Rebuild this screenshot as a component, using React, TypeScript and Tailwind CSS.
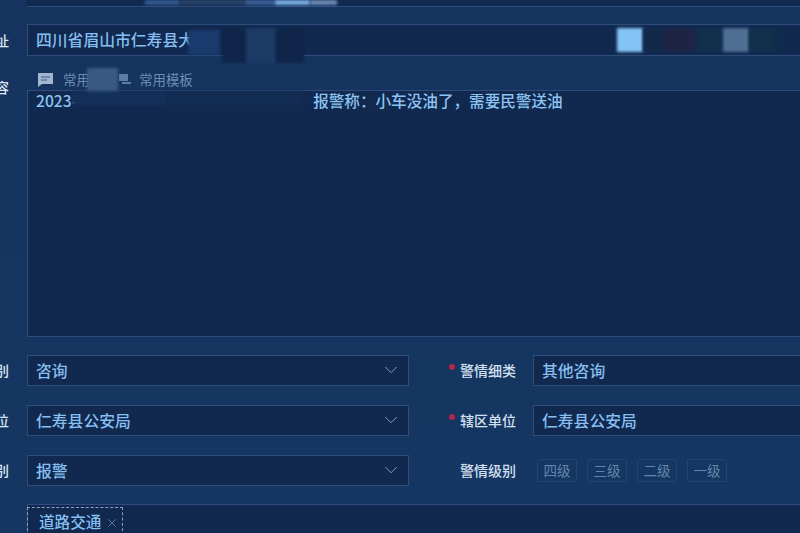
import { ChevronDown, X } from 'lucide-react'

const fieldCls = 'flex h-[31px] shrink-0 items-center border border-[#2d4d7d] bg-[#11294f] pl-2 text-[15.8px] font-medium text-[#86bff0]'

// 打码色块
const patches = [
  { left: 145, top: 0, width: 35, height: 5, color: '#33598f' },
  { left: 180, top: 0, width: 65, height: 5, color: '#2a4468' },
  { left: 245, top: 0, width: 30, height: 5, color: '#3d5f9a' },
  { left: 275, top: 0, width: 35, height: 5, color: '#7bb0e8' },
  { left: 310, top: 0, width: 27, height: 5, color: '#6d8ab2' },
  { left: 188, top: 30, width: 32, height: 25, color: '#1a3a6e' },
  { left: 222, top: 30, width: 26, height: 33, color: '#0f2549' },
  { left: 246, top: 28, width: 30, height: 36, color: '#1d3a66' },
  { left: 276, top: 30, width: 28, height: 33, color: '#0f2549' },
  { left: 617, top: 28, width: 26, height: 24, color: '#84c4f6' },
  { left: 643, top: 28, width: 22, height: 24, color: '#12294a' },
  { left: 665, top: 28, width: 30, height: 24, color: '#1f2444' },
  { left: 696, top: 28, width: 27, height: 24, color: '#12304c' },
  { left: 723, top: 28, width: 26, height: 24, color: '#4f6f95' },
  { left: 749, top: 28, width: 27, height: 24, color: '#12304c' },
  { left: 87, top: 68, width: 31, height: 28, color: '#3a5a84' },
  { left: 72, top: 91, width: 95, height: 14, color: '#14305a' },
  { left: 168, top: 91, width: 135, height: 14, color: '#132c54' },
]

function SideLabel({ text, className = '' }: { text: string; className?: string }) {
  return (
    <div className={`flex w-[27px] shrink-0 justify-end pr-[18px] text-[14px] font-medium text-[#dbe6f2] ${className}`}>
      <span className="whitespace-nowrap">{text}</span>
    </div>
  )
}

function Row({ label, children }: { label: string; children: React.ReactNode }) {
  return (
    <div className="flex items-center">
      <SideLabel text={label} />
      {children}
    </div>
  )
}

function Select({ value }: { value: string }) {
  return (
    <div className={`${fieldCls} w-[382px] justify-between pr-[6px]`}>
      <span>{value}</span>
      <ChevronDown size={22} strokeWidth={1} className="-mt-[1px] text-[#8aa6c8]" />
    </div>
  )
}

function RightLabel({ text, required }: { text: string; required?: boolean }) {
  return (
    <div className="relative ml-[51px] w-[73px] shrink-0 text-[14px] font-medium text-[#d3e0ef]">
      {required ? <span className="absolute left-[-11px] top-[4px] size-[6px] rounded-full bg-[#b3254d]" /> : null}
      {text}
    </div>
  )
}

export default function App() {
  return (
    <div
      className="relative h-[533px] w-[800px] overflow-hidden bg-gradient-to-b from-[#15335e] to-[#163763]"
      style={{ fontFamily: '"Noto Sans CJK SC", "Noto Sans", sans-serif' }}
    >
      <div className="ml-[27px] h-[7px] w-[800px] border-b border-[#2d4d7d] bg-[#11294f]" />

      <div className="mt-[17px]">
        <Row label="址">
          <div className={`${fieldCls} h-[32px] w-[800px]`}>四川省眉山市仁寿县大</div>
        </Row>
      </div>

      <div className="relative h-[34px]">
        <div className="absolute left-[38px] top-[13px] flex items-center text-[13.4px] leading-[20px] text-[#6f8db3]">
          <svg width="15" height="14" viewBox="0 0 15 14" className="mt-[2px]">
            <path d="M0 0h15v11H4l-4 3z" fill="#a3b6cf" />
            <path d="M3 4h9M3 7h6" stroke="#3a5a84" strokeWidth="1" />
          </svg>
          <span className="ml-[10px]">常用语</span>
          <svg width="14" height="12" viewBox="0 0 14 12" className="ml-[15px]">
            <path d="M1 1h9v7H1zM4 9h9v2H4z" fill="#5f7ca3" />
          </svg>
          <span className="ml-[7px]">常用模板</span>
        </div>
      </div>

      <div className="flex items-start">
        <SideLabel text="容" className="-mt-[13px]" />
        <div className="h-[247px] w-[800px] shrink-0 border border-[#2d4d7d] bg-[#11294f] pl-2 text-[15.6px] font-medium leading-[19px] text-[#8cc3f2]">
          <span>2023-</span>
          <span className="ml-[236px]">报警称：小车没油了，需要民警送油</span>
        </div>
      </div>

      <div className="mt-[18px] flex flex-col gap-[19px]">
        <Row label="别">
          <Select value="咨询" />
          <RightLabel text="警情细类" required />
          <div className={`${fieldCls} w-[300px]`}>其他咨询</div>
        </Row>
        <Row label="位">
          <Select value="仁寿县公安局" />
          <RightLabel text="辖区单位" required />
          <div className={`${fieldCls} w-[300px]`}>仁寿县公安局</div>
        </Row>
        <Row label="别">
          <Select value="报警" />
          <RightLabel text="警情级别" />
          <div className="ml-[4px] flex gap-[10px]">
            {['四级', '三级', '二级', '一级'].map((level) => (
              <span key={level} className="flex h-[23px] w-[40px] items-center justify-center rounded-[2px] border border-[#24436f] text-[13.5px] text-[#6486ad]">
                {level}
              </span>
            ))}
          </div>
        </Row>
      </div>

      <div className="ml-[27px] mt-[18px] h-[40px] w-[800px] border border-[#2d4d7d] bg-[#11294f] pt-[2px]">
        <span className="-ml-px flex h-[40px] w-[96px] items-start gap-[4px] border border-dashed border-[#8aa3c2] pl-[11px] pt-[2px] text-[15.6px] font-medium text-[#86bff0]">
          道路交通
          <X size={14} strokeWidth={1.6} className="mt-[6px] text-[#5f7ca3]" />
        </span>
      </div>

      {patches.map((p) => (
        <div
          key={`${p.left}-${p.top}`}
          className="absolute blur-[1.5px]"
          style={{ left: p.left, top: p.top, width: p.width, height: p.height, backgroundColor: p.color }}
        />
      ))}
    </div>
  )
}
